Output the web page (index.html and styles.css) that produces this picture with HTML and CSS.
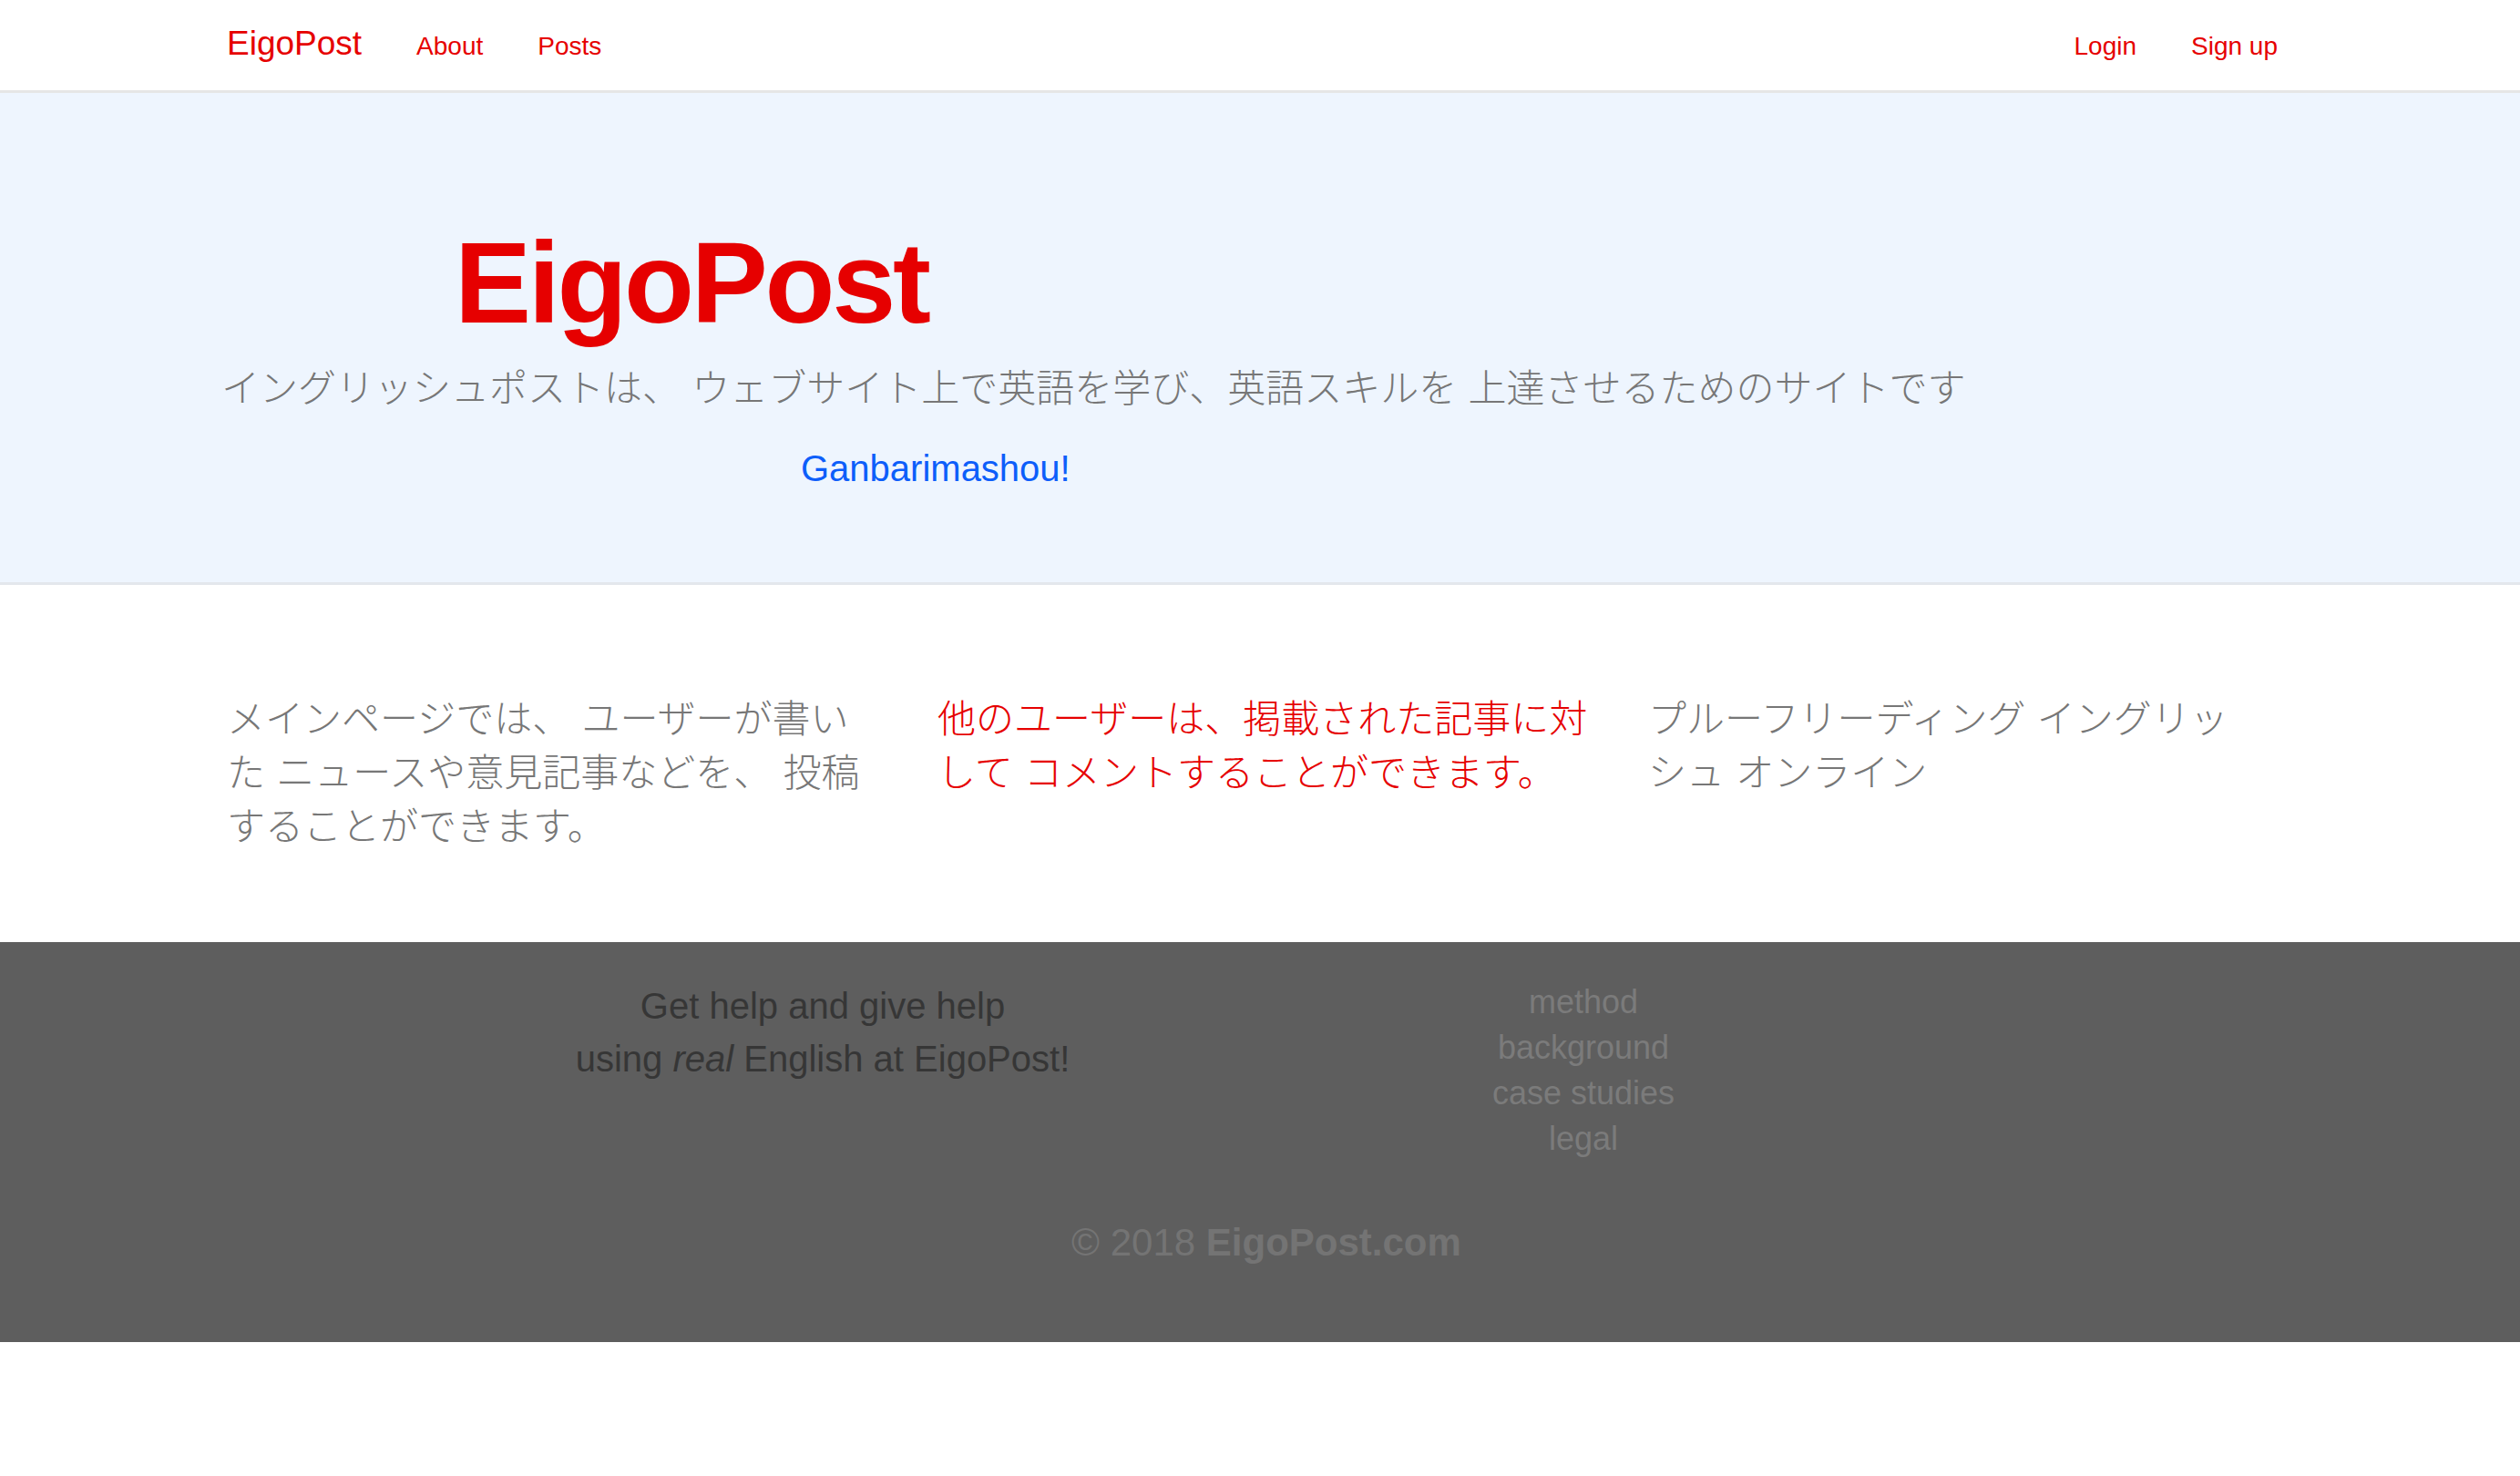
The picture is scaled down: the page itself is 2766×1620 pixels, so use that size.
FILE: index.html
```html
<!DOCTYPE html>
<html lang="ja">
<head>
<meta charset="utf-8">
<title>EigoPost</title>
<link rel="stylesheet" href="styles.css">
</head>
<body>
<nav class="navbar">
  <div class="nav-left">
    <a class="brand" href="#">EigoPost</a>
    <a class="nav-link" href="#">About</a>
    <a class="nav-link" href="#">Posts</a>
  </div>
  <div class="nav-right">
    <a class="nav-link" href="#">Login</a>
    <a class="nav-link" href="#">Sign up</a>
  </div>
</nav>

<header class="hero">
  <h1 class="hero-title">EigoPost</h1>
  <p class="hero-sub jp">イングリッシュポストは、 ウェブサイト上で英語を学び、英語スキルを 上達させるためのサイトです</p>
  <p class="hero-cheer">Ganbarimashou!</p>
</header>

<section class="features">
  <p class="feature jp">メインページでは、 ユーザーが書い<br>た ニュースや意見記事などを、 投稿<br>することができます。</p>
  <p class="feature feature-red jp">他のユーザーは、掲載された記事に対<br>して コメントすることができます。</p>
  <p class="feature jp">プルーフリーディング イングリッ<br>シュ オンライン</p>
</section>

<footer class="footer">
  <div class="footer-row">
    <p class="footer-tag">Get help and give help<br>using <em>real</em> English at EigoPost!</p>
    <ul class="footer-links">
      <li><a href="#">method</a></li>
      <li><a href="#">background</a></li>
      <li><a href="#">case studies</a></li>
      <li><a href="#">legal</a></li>
    </ul>
  </div>
  <p class="copyright">© 2018 <strong>EigoPost.com</strong></p>
</footer>
</body>
</html>
```

FILE: styles.css
```css
* { box-sizing: border-box; }

html, body {
  margin: 0;
  padding: 0;
  background: #ffffff;
  font-family: "Liberation Sans", Arial, "Noto Sans CJK JP", sans-serif;
}

a { text-decoration: none; }

.jp {
  font-family: "Noto Sans CJK JP", "Liberation Sans", sans-serif;
  font-weight: 300;
  word-spacing: 3px;
}

/* NAVBAR */
.navbar {
  height: 102px;
  border-bottom: 3px solid #e6e6e6;
  display: flex;
  justify-content: space-between;
  align-items: baseline;
  padding: 28px 266px 0 249px;
  background: #ffffff;
}

.nav-left,
.nav-right {
  display: flex;
  align-items: baseline;
  gap: 60px;
}

.nav-right { gap: 60px; }

.brand {
  color: #e60000;
  font-size: 37px;
  line-height: 40px;
}

.nav-link {
  color: #e60000;
  font-size: 28px;
  line-height: 40px;
}

/* HERO */
.hero {
  background: #eef5fe;
  border-bottom: 3px solid #e3e7ec;
  padding: 139px 0 96px 243px;
}

.hero-title {
  margin: 0 0 0 256px;
  color: #e60000;
  font-size: 126px;
  line-height: 139px;
  font-weight: 700;
  letter-spacing: -3.3px;
}

.hero-sub {
  margin: 14px 0 0 0;
  color: #777777;
  font-size: 42px;
  line-height: 58px;
}

.hero-cheer {
  margin: 33px 0 0 636px;
  color: #0d5efa;
  font-size: 40px;
  line-height: 58px;
}

/* FEATURES */
.features {
  display: grid;
  grid-template-columns: 780px 780px 780px;
  padding: 114px 0 101px 249px;
}

.feature {
  margin: 0;
  color: #777777;
  font-size: 42px;
  line-height: 59px;
  white-space: nowrap;
}

.feature-red { color: #e60000; }

/* FOOTER */
.footer {
  background: #5e5e5e;
  padding: 41px 0 80px 0;
}

.footer-row {
  display: flex;
  align-items: flex-start;
  padding-left: 513px;
  gap: 245px;
}

.footer-tag {
  margin: 0;
  width: 780px;
  text-align: center;
  color: #363636;
  font-size: 40px;
  line-height: 58px;
}

.footer-tag em { font-style: italic; }

.footer-links {
  list-style: none;
  margin: 0;
  padding: 0;
  width: 400px;
  text-align: center;
}

.footer-links li {
  font-size: 36px;
  line-height: 50px;
}

.footer-links a { color: #7b7b7b; }

.copyright {
  margin: 60px 0 0 0;
  padding-left: 14px;
  text-align: center;
  color: #747474;
  font-size: 42px;
  line-height: 58px;
}

.copyright strong { font-weight: 700; }
```
